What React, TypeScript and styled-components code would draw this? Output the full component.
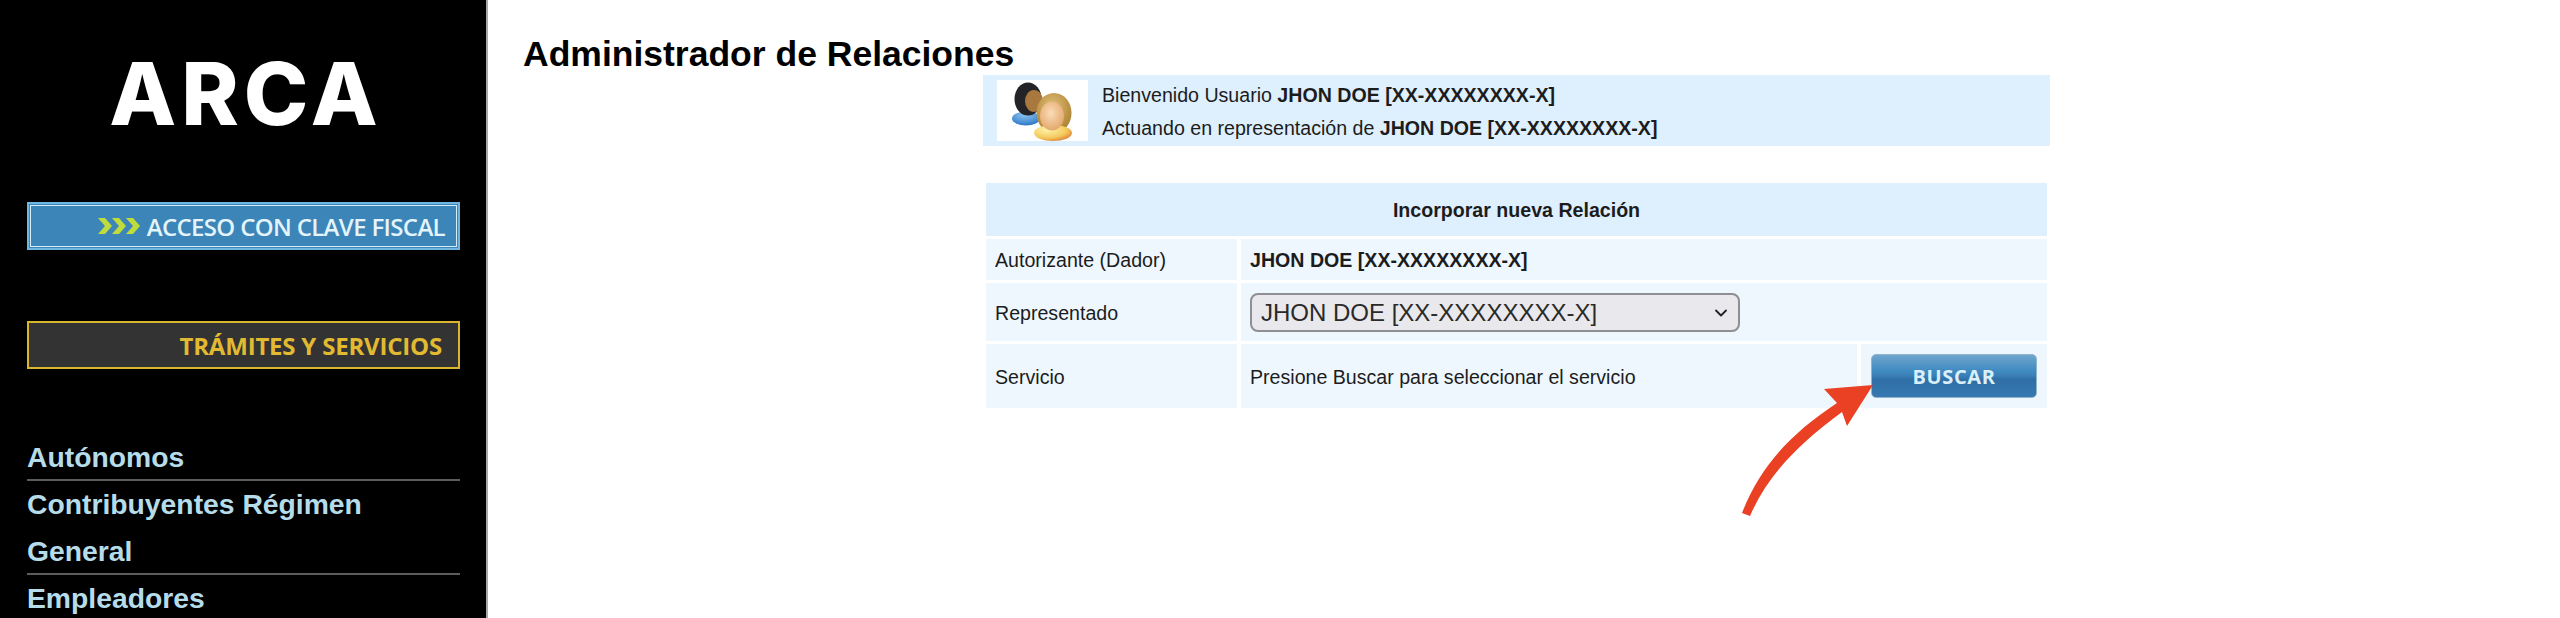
import React from 'react'
import styled, { createGlobalStyle } from 'styled-components'
import { ChevronDown } from 'lucide-react'

const GlobalStyle = createGlobalStyle`
  html, body {
    margin: 0;
    padding: 0;
    background: #fff;
    overflow: hidden;
  }
  body {
    font-family: "Liberation Sans", Arial, sans-serif;
    color: #1c1c1c;
  }
`

const navItems = [
  { label: 'Autónomos', height: 47 },
  { label: 'Contribuyentes Régimen General', height: 94 },
  { label: 'Empleadores', height: 47 }
]

const UsersIcon = () => (
  <svg width="91" height="61" viewBox="0 0 91 61">
    <defs>
      <radialGradient id="blueBody" cx="45%" cy="25%" r="75%">
        <stop offset="0%" stopColor="#8cc4f0" />
        <stop offset="100%" stopColor="#2f78c8" />
      </radialGradient>
      <radialGradient id="yellowBody" cx="35%" cy="30%" r="85%">
        <stop offset="0%" stopColor="#fff2a8" />
        <stop offset="60%" stopColor="#f3c95c" />
        <stop offset="100%" stopColor="#d9672a" />
      </radialGradient>
      <radialGradient id="hairGold" cx="45%" cy="35%" r="65%">
        <stop offset="0%" stopColor="#e2c07c" />
        <stop offset="100%" stopColor="#ac8230" />
      </radialGradient>
      <radialGradient id="faceLight" cx="45%" cy="40%" r="65%">
        <stop offset="0%" stopColor="#fbdcb8" />
        <stop offset="100%" stopColor="#e2a467" />
      </radialGradient>
    </defs>
    <ellipse cx="29" cy="38.5" rx="14" ry="7" fill="url(#blueBody)" />
    <ellipse cx="31" cy="19" rx="13.5" ry="16.5" fill="#242428" />
    <ellipse cx="37" cy="21" rx="9" ry="11" fill="#a9783f" />
    <ellipse cx="57" cy="33" rx="17.5" ry="20" fill="url(#hairGold)" />
    <ellipse cx="56" cy="53" rx="19" ry="8" fill="url(#yellowBody)" />
    <ellipse cx="55" cy="36" rx="12" ry="14.5" fill="url(#faceLight)" />
  </svg>
)

export default function App() {
  return (
    <Page>
      <GlobalStyle />
      <Sidebar>
        <Logo>ARCA</Logo>
        <AccessBanner>
          <Chevrons>
            <svg width="42" height="18" viewBox="0 0 42 18">
              <path d="M0 1h7l7 8-7 8H0l7-8z" fill="#bfdc3c" />
              <path d="M14 1h7l7 8-7 8h-7l7-8z" fill="#bfdc3c" />
              <path d="M28 1h7l7 8-7 8h-7l7-8z" fill="#bfdc3c" />
            </svg>
          </Chevrons>
          ACCESO CON CLAVE FISCAL
        </AccessBanner>
        <ServicesBanner>TRÁMITES Y SERVICIOS</ServicesBanner>
        <Nav>
          {navItems.map((item) => (
            <NavItem key={item.label} $height={item.height}>
              {item.label}
            </NavItem>
          ))}
        </Nav>
      </Sidebar>
      <Main>
        <Title>Administrador de Relaciones</Title>
        <Welcome>
          <Avatar>
            <UsersIcon />
          </Avatar>
          <WelcomeText>
            <div>
              Bienvenido Usuario <b>JHON DOE [XX-XXXXXXXX-X]</b>
            </div>
            <div>
              Actuando en representación de <b>JHON DOE [XX-XXXXXXXX-X]</b>
            </div>
          </WelcomeText>
        </Welcome>
        <Form>
          <FormHeader>Incorporar nueva Relación</FormHeader>
          <Cell>Autorizante (Dador)</Cell>
          <Cell $span={2}>
            <b>JHON DOE [XX-XXXXXXXX-X]</b>
          </Cell>
          <Cell>Representado</Cell>
          <Cell $span={2}>
            <SelectWrap>
              <Select defaultValue="doe">
                <option value="doe">JHON DOE [XX-XXXXXXXX-X]</option>
              </Select>
              <SelectArrow>
                <ChevronDown size={20} strokeWidth={2.2} />
              </SelectArrow>
            </SelectWrap>
          </Cell>
          <Cell>Servicio</Cell>
          <Cell>Presione Buscar para seleccionar el servicio</Cell>
          <ButtonCell>
            <SearchButton>BUSCAR</SearchButton>
          </ButtonCell>
        </Form>
      </Main>
      <Arrow width="150" height="150" viewBox="1735 375 150 150">
        <path
          d="M1742 513C1760 467 1790 434 1837 403L1824 389L1873 385L1847 426L1842 412C1800 443 1768 474 1750 516Z"
          fill="#ea4023"
        />
      </Arrow>
    </Page>
  )
}

const Page = styled.div`
  position: relative;
  display: flex;
  width: 2560px;
  height: 618px;
  overflow: hidden;
`

const Sidebar = styled.aside`
  box-sizing: border-box;
  flex: 0 0 488px;
  height: 618px;
  padding: 0 26px 0 27px;
  background: #000;
  border-right: 2px solid #a8a8a8;
  overflow: hidden;
`

const Logo = styled.div`
  height: 202px;
  padding: 40px 0 0 5px;
  box-sizing: border-box;
  font-family: Inter, "Liberation Sans", sans-serif;
  font-size: 87px;
  font-weight: 800;
  letter-spacing: 5px;
  line-height: 108px;
  text-align: center;
  color: #fff;
`

const Banner = styled.div`
  box-sizing: border-box;
  display: flex;
  align-items: center;
  justify-content: flex-end;
  height: 48px;
  font-family: "Open Sans", sans-serif;
  font-size: 24px;
  font-weight: 600;
  white-space: nowrap;
`

const AccessBanner = styled(Banner)`
  padding-right: 13px;
  background: #3c85b8;
  border: 2px solid #6fb7e0;
  outline: 1px solid #d6eefa;
  outline-offset: -4px;
  color: #e4f4fb;
  letter-spacing: -0.65px;
`

const Chevrons = styled.span`
  display: flex;
  margin-right: 7px;
`

const ServicesBanner = styled(Banner)`
  margin-top: 71px;
  padding-right: 16px;
  background: #333;
  border: 2px solid #d8b52c;
  color: #e2ba32;
  font-weight: 700;
  letter-spacing: -0.2px;
`

const Nav = styled.nav`
  margin-top: 65px;
`

const NavItem = styled.div<{ $height: number }>`
  box-sizing: border-box;
  height: ${(p) => p.$height}px;
  border-bottom: 2px solid #5c5c5c;
  font-size: 28.3px;
  font-weight: 700;
  line-height: 47px;
  color: #b6dcea;
`

const Main = styled.main`
  box-sizing: border-box;
  display: flex;
  flex-direction: column;
  flex: 1;
  padding: 34px 50px 0 35px;
`

const Title = styled.h1`
  margin: 0;
  height: 41px;
  font-size: 35.5px;
  font-weight: 700;
  line-height: 41px;
  color: #000;
`

const Welcome = styled.section`
  box-sizing: border-box;
  display: flex;
  align-items: center;
  align-self: center;
  width: 1067px;
  height: 71px;
  padding-left: 14px;
  background: #deeffd;
`

const Avatar = styled.div`
  display: flex;
  background: #fff;
  margin-right: 14px;
`

const WelcomeText = styled.div`
  padding-top: 2px;
  font-size: 19.6px;
  line-height: 33px;
`

const Form = styled.section`
  display: grid;
  grid-template-columns: 251px 616px 186px;
  grid-template-rows: 53px 41px 58px 64px;
  gap: 3px 4px;
  align-self: center;
  margin-top: 37px;
`

const FormHeader = styled.div`
  grid-column: 1 / -1;
  display: flex;
  align-items: center;
  justify-content: center;
  padding-top: 2px;
  background: #deeffd;
  font-size: 19.6px;
  font-weight: 700;
`

const Cell = styled.div<{ $span?: number }>`
  grid-column: span ${(p) => p.$span || 1};
  display: flex;
  align-items: center;
  padding: 2px 0 0 9px;
  background: #eef7fe;
  font-size: 19.6px;
`

const ButtonCell = styled.div`
  display: flex;
  align-items: center;
  padding-left: 10px;
  background: #eef7fe;
`

const SelectWrap = styled.div`
  position: relative;
  width: 490px;
  height: 39px;
  margin-top: -2px;
`

const Select = styled.select`
  box-sizing: border-box;
  appearance: none;
  width: 100%;
  height: 100%;
  padding: 0 30px 0 9px;
  background: #e9e8ec;
  border: 2px solid #8e8e94;
  border-radius: 8px;
  font-family: "Liberation Sans", sans-serif;
  font-size: 24px;
  color: #2a2a2a;
`

const SelectArrow = styled.span`
  position: absolute;
  top: 10px;
  right: 9px;
  display: flex;
  color: #222;
`

const SearchButton = styled.button`
  box-sizing: border-box;
  width: 166px;
  height: 44px;
  padding: 0;
  background: linear-gradient(
    #6fa6cb 0,
    #3f8ac2 38%,
    #3a7fb6 50%,
    #2f6fa6 58%,
    #3878b0 100%
  );
  border: 1px solid #8fb4cd;
  border-radius: 5px;
  font-family: "Open Sans", sans-serif;
  font-size: 20px;
  font-weight: 700;
  letter-spacing: 0.6px;
  color: #d9eff9;
`

const Arrow = styled.svg`
  position: absolute;
  left: 1735px;
  top: 375px;
`
